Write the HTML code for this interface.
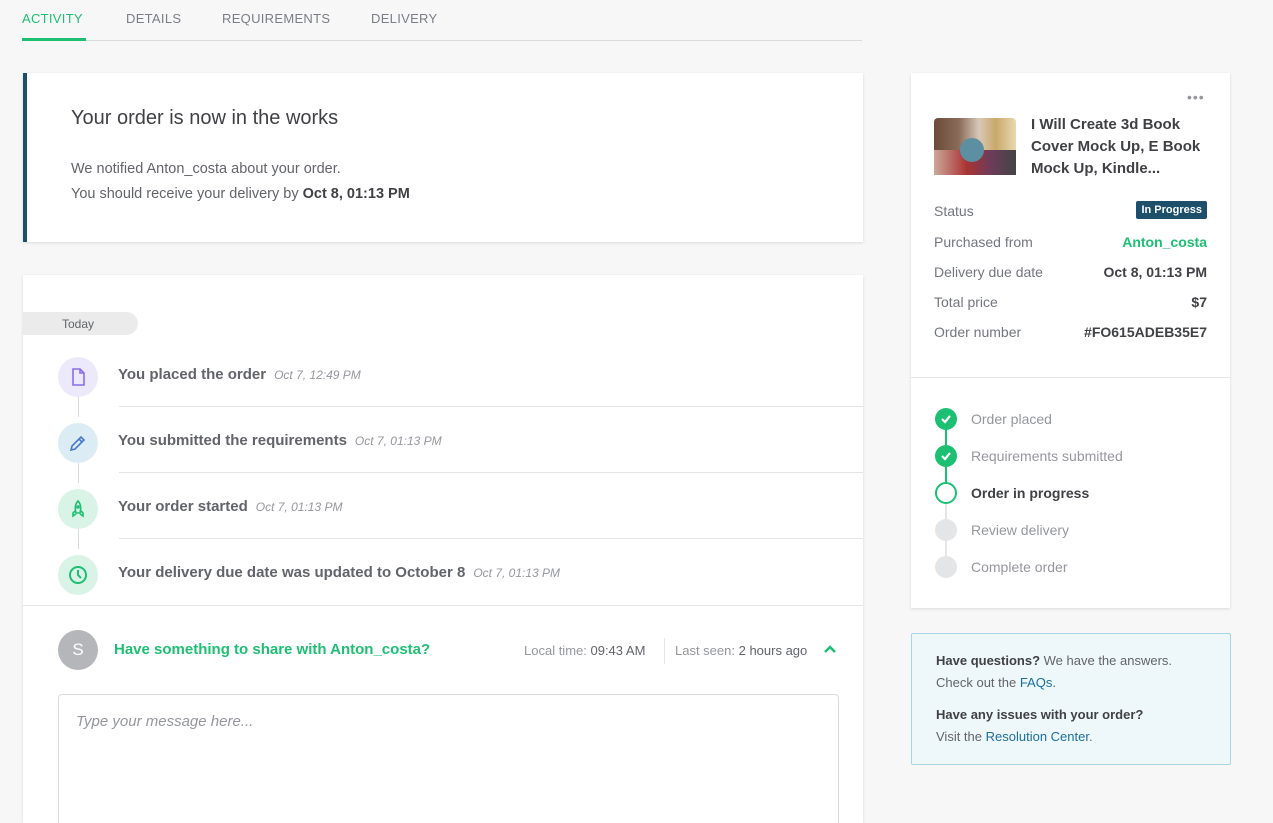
<!DOCTYPE html>
<html><head><meta charset="utf-8"><style>
*{box-sizing:border-box;margin:0;padding:0}
html,body{width:1273px;height:823px;overflow:hidden}
body{background:#f7f7f7;font-family:"Liberation Sans",sans-serif;color:#62646a;position:relative}
.abs{position:absolute}
.tab{position:absolute;top:11px;font-size:13px;letter-spacing:.3px;color:#7a7d85}
.card{position:absolute;background:#fff;box-shadow:0 1px 3px rgba(0,0,0,.12)}
.ic{position:absolute;left:35px;width:40px;height:40px;border-radius:50%}
.ic svg{position:absolute;left:10px;top:10px}
.ev{position:absolute;left:95px;font-size:15px;font-weight:bold;color:#62646a}
.ev i{font-weight:normal;font-size:12px;color:#95979d;margin-left:8px}
.hl{position:absolute;left:96px;right:0;height:1px;background:#e4e5e7}
.vl{position:absolute;left:55px;width:1px;background:#dadbdd}
.row{position:absolute;left:23px;right:23px;font-size:14px;color:#74767e}
.row b{position:absolute;right:0;color:#404145}
.st{position:absolute;left:60px;font-size:14px;color:#95979d}
.dot{position:absolute;left:24px;width:22px;height:22px;border-radius:50%}
</style></head><body>
<div class="tab" style="left:22px;color:#1dbf73">ACTIVITY</div>
<div class="tab" style="left:126px">DETAILS</div>
<div class="tab" style="left:222px">REQUIREMENTS</div>
<div class="tab" style="left:371px">DELIVERY</div>
<div class="abs" style="left:22px;top:40px;width:840px;height:1px;background:#dadbdd"></div>
<div class="abs" style="left:22px;top:38px;width:64px;height:3px;background:#1dbf73"></div>

<div class="card" style="left:23px;top:73px;width:840px;height:169px;border-left:4px solid #1d4f6b">
<div class="abs" style="left:44px;top:34px;font-size:20px;color:#404145">Your order is now in the works</div>
<div class="abs" style="left:44px;top:84px;font-size:14.5px;line-height:25px;color:#62646a">We notified Anton_costa about your order.<br>You should receive your delivery by <b style="color:#404145">Oct 8, 01:13 PM</b></div>
</div>

<div class="card" style="left:23px;top:275px;width:840px;height:548px;overflow:hidden">
<div class="abs" style="left:0;top:37px;width:115px;height:23px;background:#ebebeb;border-radius:0 12px 12px 0;font-size:12px;color:#62646a;padding:5px 0 0 39px">Today</div>
<div class="vl" style="top:122px;height:20px"></div>
<div class="vl" style="top:188px;height:20px"></div>
<div class="vl" style="top:254px;height:20px"></div>
<div class="ic" style="top:82px;background:#ece9fb"><svg width="20" height="20" viewBox="0 0 20 20" fill="none" stroke="#8a6ee6" stroke-width="1.6"><path d="M5 2h7l4 4v12H5z M12 2v4h4"/></svg></div>
<div class="ev" style="top:91px">You placed the order<i>Oct 7, 12:49 PM</i></div>
<div class="hl" style="top:131px"></div>
<div class="ic" style="top:148px;background:#dcecf5"><svg width="20" height="20" viewBox="0 0 20 20" fill="none" stroke="#4a78c9" stroke-width="1.6"><path d="M3 17l1-4 9-9 3 3-9 9z M11 6l3 3"/></svg></div>
<div class="ev" style="top:157px">You submitted the requirements<i>Oct 7, 01:13 PM</i></div>
<div class="hl" style="top:197px"></div>
<div class="ic" style="top:214px;background:#d9f3e6"><svg width="20" height="20" viewBox="0 0 20 20" fill="none" stroke="#1dbf73" stroke-width="1.6"><path d="M10 2c3 3 3 8 2 12H8C7 10 7 5 10 2z M8 11l-3 3v3l3-2 M12 11l3 3v3l-3-2"/><circle cx="10" cy="8" r="1"/></svg></div>
<div class="ev" style="top:223px">Your order started<i>Oct 7, 01:13 PM</i></div>
<div class="hl" style="top:263px"></div>
<div class="ic" style="top:280px;background:#d9f3e6"><svg width="20" height="20" viewBox="0 0 20 20" fill="none" stroke="#1dbf73" stroke-width="2"><circle cx="10" cy="10" r="8"/><path d="M10 5v5l3 3"/></svg></div>
<div class="ev" style="top:289px">Your delivery due date was updated to October 8<i>Oct 7, 01:13 PM</i></div>
<div class="abs" style="left:0;right:0;top:330px;height:1px;background:#e4e5e7"></div>
<div class="abs" style="left:35px;top:355px;width:40px;height:40px;border-radius:50%;background:#b5b6ba;color:#fff;font-size:17px;text-align:center;line-height:40px">S</div>
<div class="abs" style="left:91px;top:366px;font-size:15px;font-weight:bold;color:#1dbf73">Have something to share with Anton_costa?</div>
<div class="abs" style="left:501px;top:368px;font-size:13px;color:#95979d">Local time: <span style="color:#62646a">09:43 AM</span></div>
<div class="abs" style="left:641px;top:363px;width:1px;height:26px;background:#e4e5e7"></div>
<div class="abs" style="left:652px;top:368px;font-size:13px;color:#95979d">Last seen: <span style="color:#62646a">2 hours ago</span></div>
<svg class="abs" style="left:800px;top:368px" width="14" height="12" viewBox="0 0 14 12"><path d="M2 9l5-5 5 5" fill="none" stroke="#1dbf73" stroke-width="2.5"/></svg>
<div class="abs" style="left:35px;top:419px;width:781px;height:129px;border:1px solid #dadbdd;border-bottom:none;border-radius:4px 4px 0 0"></div>
<div class="abs" style="left:53px;top:438px;font-size:15px;font-style:italic;color:#95979d">Type your message here...</div>
</div>

<div class="card" style="left:911px;top:73px;width:319px;height:535px">
<div class="abs" style="left:276px;top:16px;font-size:14px;color:#95979d;letter-spacing:1px">•••</div>
<div class="abs" style="left:23px;top:45px;width:82px;height:57px;border-radius:4px;background:linear-gradient(90deg,#6b4a3a 0,#8a6a58 30%,#d8c8b8 55%,#c9a86a 75%,#e8d9b0 100%)"><div class="abs" style="left:0;top:32px;width:82px;height:25px;background:linear-gradient(90deg,#caa89a,#a33 40%,#6a3c5a 70%,#444)"></div><div class="abs" style="left:26px;top:20px;width:24px;height:24px;border-radius:50%;background:#5d8fa3"></div></div>
<div class="abs" style="left:120px;top:41px;font-size:15px;font-weight:bold;line-height:22px;color:#404145">I Will Create 3d Book<br>Cover Mock Up, E Book<br>Mock Up, Kindle...</div>
<div class="row" style="top:130px">Status<b style="top:-2px;background:#1d4f6b;color:#fff;font-size:11px;padding:3px 5px;border-radius:2px">In Progress</b></div>
<div class="row" style="top:161px">Purchased from<b style="color:#1dbf73">Anton_costa</b></div>
<div class="row" style="top:191px">Delivery due date<b>Oct 8, 01:13 PM</b></div>
<div class="row" style="top:221px">Total price<b>$7</b></div>
<div class="row" style="top:251px">Order number<b>#FO615ADEB35E7</b></div>
<div class="abs" style="left:0;right:0;top:304px;height:1px;background:#e4e5e7"></div>
<div class="abs" style="left:34px;top:346px;width:2px;height:74px;background:#1dbf73"></div>
<div class="abs" style="left:34px;top:420px;width:2px;height:74px;background:#e4e5e7"></div>
<div class="dot" style="top:335px;background:#1dbf73"><svg width="22" height="22"><path d="M7 11l3 3 5-6" fill="none" stroke="#fff" stroke-width="2.2"/></svg></div>
<div class="dot" style="top:372px;background:#1dbf73"><svg width="22" height="22"><path d="M7 11l3 3 5-6" fill="none" stroke="#fff" stroke-width="2.2"/></svg></div>
<div class="dot" style="top:409px;background:#fff;border:2px solid #1dbf73"></div>
<div class="dot" style="top:446px;background:#e4e5e7"></div>
<div class="dot" style="top:483px;background:#e4e5e7"></div>
<div class="st" style="top:338px">Order placed</div>
<div class="st" style="top:375px">Requirements submitted</div>
<div class="st" style="top:412px;font-weight:bold;color:#404145">Order in progress</div>
<div class="st" style="top:449px">Review delivery</div>
<div class="st" style="top:486px">Complete order</div>
</div>

<div class="abs" style="left:911px;top:633px;width:320px;height:132px;background:#eef7fa;border:1px solid #a9d3e6;border-radius:2px;font-size:13px;line-height:22px;color:#62646a;padding:16px 24px">
<div><b style="color:#404145">Have questions?</b> We have the answers.<br>Check out the <span style="color:#1d6fa3">FAQs</span>.</div>
<div style="margin-top:10px"><b style="color:#404145">Have any issues with your order?</b><br>Visit the <span style="color:#1d6fa3">Resolution Center</span>.</div>
</div>
</body></html>
